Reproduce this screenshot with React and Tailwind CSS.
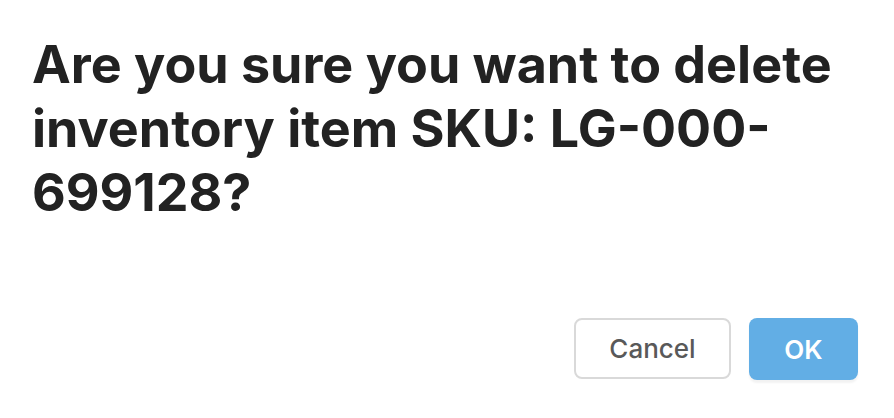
import React from "react";

export default function App() {
  return (
    <div className="w-[894px] h-[418px] bg-white flex flex-col font-['Inter',sans-serif]">
      <div className="pl-8 pr-9 pt-[33px]">
        <h1 className="text-[52px] leading-[64px] font-bold text-[#222222]">
          Are you sure you want to delete inventory item SKU: LG-000-699128?
        </h1>
      </div>
      <div className="flex justify-end gap-[18px] pr-9 mt-auto mb-[38px]">
        <button className="w-[157px] h-[61px] rounded-lg border-2 border-[#d9d9d9] bg-white text-[26px] font-medium text-[#595959]">
          Cancel
        </button>
        <button className="w-[109px] h-[62px] rounded-lg bg-[#62aee5] text-[26px] font-semibold text-white shadow-[0_3px_2px_rgba(0,0,0,0.05)]">
          OK
        </button>
      </div>
    </div>
  );
}
